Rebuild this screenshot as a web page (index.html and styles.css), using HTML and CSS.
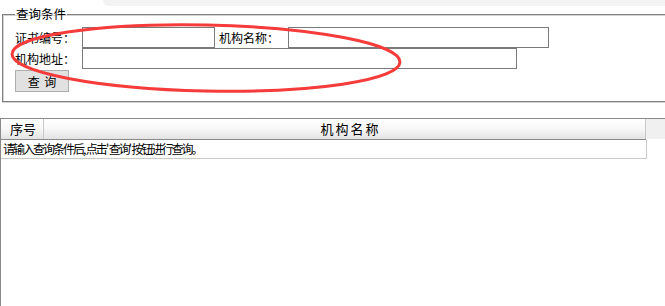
FILE: index.html
```html
<!DOCTYPE html>
<html lang="zh-CN">
<head>
<meta charset="utf-8">
<title>查询</title>
<link rel="stylesheet" href="styles.css">
</head>
<body>
<div class="topband"></div>
<fieldset class="query">
  <legend class="legend">查询条件</legend>
  <div class="row">
    <label class="lbl">证书编号：</label><input class="inp inp-cert" type="text"><label class="lbl lbl-name">机构名称：</label><input class="inp inp-name" type="text">
  </div>
  <div class="row">
    <label class="lbl">机构地址：</label><input class="inp inp-addr" type="text">
  </div>
  <button class="btn" type="button">查 询</button>
</fieldset>
<div class="grid">
  <div class="ghead">
    <div class="hcells">
      <div class="hcell h-no">序号</div>
      <div class="hcell h-name">机构名称</div>
    </div>
    <div class="hfill"></div>
  </div>
  <div class="grow">请输入查询条件后<span class="pn">,</span>点击<span class="pn">'</span>查询<span class="pn">'</span>按钮进行查询。</div>
</div>
<svg class="mark" width="665" height="306" viewBox="0 0 665 306">
  <ellipse cx="206" cy="58" rx="194" ry="33" fill="none" stroke="#f63b3b" stroke-width="3" transform="rotate(1.2 206 58)"/>
</svg>
</body>
</html>
```
FILE: styles.css
```css
html, body {
  margin: 0;
  padding: 0;
  overflow: hidden;
  background: #fff;
}
body {
  width: 665px;
  height: 306px;
  position: relative;
  font-family: "Noto Sans CJK SC", "DejaVu Sans", sans-serif;
  font-size: 12px;
  color: #000;
}
.topband {
  height: 6px;
  margin-left: 103px;
  background: #f3f3f3;
  border-bottom-left-radius: 8px;
}
.query {
  display: block;
  margin: 1px -20px 0 2px;
  padding: 6px 0 9px 12px;
  border: 1px solid #808080;
  box-shadow: inset 1px 1px 0 #d4d4d4, 0 1px 0 #d4d4d4;
  min-width: 0;
}
.legend {
  padding: 0 1px;
  margin-left: 0;
  font-size: 12.5px;
  line-height: 14px;
}
.row {
  display: flex;
  height: 21px;
}
.lbl {
  line-height: 21px;
  width: 67px;
  white-space: nowrap;
}
.lbl-name {
  width: 69px;
  padding-left: 4px;
}
.inp {
  box-sizing: border-box;
  height: 21px;
  margin: 0;
  padding: 0 2px;
  border: 1px solid #7a7a7a;
  background: #fff;
  font: inherit;
  outline: none;
}
.inp-cert { width: 133px; }
.inp-name { width: 261px; }
.inp-addr { width: 435px; }
.btn {
  display: block;
  box-sizing: border-box;
  width: 54px;
  height: 22px;
  margin: 1px 0 0 0;
  padding: 0;
  border: 1px solid #adadad;
  background: #e1e1e1;
  font: inherit;
  font-size: 12px;
  word-spacing: 2px;
  color: #000;
}
.grid {
  margin-top: 16px;
  height: 200px;
  border-top: 1px solid #8a8a8a;
  border-left: 1px solid #8a8a8a;
}
.ghead {
  display: flex;
  height: 21px;
}
.hcells {
  display: flex;
  width: 645px;
  height: 20px;
  border-bottom: 1px solid #8a8a8a;
  background: linear-gradient(#ffffff 0%, #f7f7f7 50%, #e3e3e3 100%);
}
.hcell {
  box-sizing: border-box;
  height: 20px;
  line-height: 20px;
  font-size: 13px;
  border-right: 1px solid #c8c8c8;
}
.h-no {
  width: 43px;
  padding-left: 9px;
}
.h-name {
  flex: 1;
  text-align: center;
  padding-left: 12px;
  letter-spacing: 2px;
}
.hfill {
  flex: 1;
  background: #f0f0f0;
  height: 20px;
}
.grow {
  box-sizing: border-box;
  width: 646px;
  height: 19px;
  line-height: 18px;
  padding-left: 2px;
  border-right: 1px solid #c8c8c8;
  border-bottom: 1px solid #c8c8c8;
  letter-spacing: -2px;
  white-space: nowrap;
}
.pn {
  letter-spacing: -0.5px;
}
.mark {
  position: absolute;
  left: 0;
  top: 0;
  pointer-events: none;
}
```
